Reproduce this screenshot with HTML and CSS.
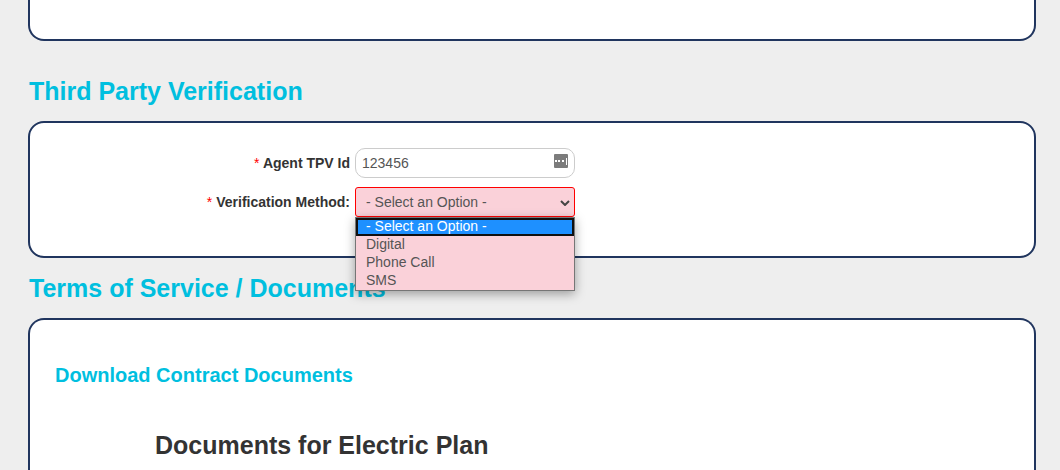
FILE: index.html
```
<!DOCTYPE html>
<html lang="en">
<head>
    <meta charset="UTF-8">
    <title>Third Party Verification</title>
    <link rel="stylesheet" href="styles.css">
</head>
<body>
<main class="page">
    <section class="panel panel-end"></section>

    <h2 class="section-title section-title-spaced">Third Party Verification</h2>
    <form class="panel tpv-form">
        <div class="form-row">
            <label class="form-label" for="agentTpvId"><span class="required">*</span> Agent TPV Id</label>
            <div class="field">
                <input class="text-input" type="text" id="agentTpvId" value="123456">
                <svg class="field-icon" width="14" height="14" viewBox="0 0 14 14" aria-hidden="true">
                    <rect width="14" height="14" rx="1" fill="#7c7c7c"/>
                    <path d="M1 6h2v2H1zM4 6h2v2H4zM8 6h2v2H8zM12 4h1v7h-1z" fill="#fff"/>
                </svg>
            </div>
        </div>
        <div class="form-row">
            <label class="form-label" for="verificationMethod"><span class="required">*</span> Verification Method:</label>
            <div class="field">
                <select class="select-input" id="verificationMethod">
                    <option selected>- Select an Option -</option>
                    <option>Digital</option>
                    <option>Phone Call</option>
                    <option>SMS</option>
                </select>
                <svg class="select-arrow" width="10" height="6" viewBox="0 0 10 6" aria-hidden="true">
                    <path d="M1 1l4 4 4-4" fill="none" stroke="#444" stroke-width="2"/>
                </svg>
                <ul class="option-list" role="listbox" aria-label="Verification Method">
                    <li class="option active" role="option" aria-selected="true">- Select an Option -</li>
                    <li class="option" role="option">Digital</li>
                    <li class="option" role="option">Phone Call</li>
                    <li class="option" role="option">SMS</li>
                </ul>
            </div>
        </div>
    </form>

    <h2 class="section-title">Terms of Service / Documents</h2>
    <section class="panel documents">
        <h3 class="documents-title">Download Contract Documents</h3>
        <h2 class="plan-title">Documents for Electric Plan</h2>
    </section>
</main>
</body>
</html>
```
FILE: styles.css
```
* {
    box-sizing: border-box;
}
body {
    margin: 0;
    background-color: #eee;
    color: #333;
    font-family: "Liberation Sans", Arial, sans-serif;
    font-size: 14px;
    line-height: 20px;
}
.page {
    display: flex;
    flex-direction: column;
    min-height: 100vh;
    padding: 0 24px 0 28px;
}
.panel {
    border: 2px solid #20355e;
    border-radius: 16px;
    background-color: #fff;
}
.panel-end {
    padding-top: 39px;
    border-top: 0;
    border-radius: 0 0 16px 16px;
}
.section-title {
    margin: 10px 0;
    padding-left: 1px;
    color: #00bfdf;
    font-size: 25px;
    line-height: 40px;
}
.section-title-spaced {
    margin-top: 30px;
}

.tpv-form {
    display: flex;
    flex-direction: column;
    gap: 9px;
    padding: 25px 25px 39px;
}
.form-row {
    display: flex;
    align-items: center;
    gap: 5px;
}
.form-label {
    width: 295px;
    font-weight: bold;
    text-align: right;
}
.required {
    color: #f00;
    font-weight: normal;
}
.field {
    position: relative;
    width: 220px;
}
.text-input,
.select-input {
    display: block;
    width: 100%;
    height: 30px;
    color: #555;
    font: inherit;
}
.text-input {
    padding: 4px 28px 4px 6px;
    border: 1px solid #ccc;
    border-radius: 10px;
    background-color: #fff;
}
.select-input {
    padding: 4px 20px 4px 10px;
    border: 1px solid #f00;
    border-radius: 3px;
    background-color: #fad1d9;
    appearance: none;
}
.field-icon {
    position: absolute;
    top: 6px;
    right: 7px;
}
.select-arrow {
    position: absolute;
    top: 13px;
    right: 5px;
    pointer-events: none;
}

/* open drop-down */
.option-list {
    position: absolute;
    top: 100%;
    left: 0;
    z-index: 1;
    width: 100%;
    margin: 0;
    padding: 0 0 2px;
    border: 1px solid #767676;
    background-color: #fad1d9;
    box-shadow: 0 3px 10px rgba(0, 0, 0, .35);
    color: #555;
    list-style: none;
}
.option {
    height: 18px;
    padding: 0 10px;
    line-height: 16px;
}
.option.active {
    padding: 0 8px;
    border: 2px solid #101010;
    background-color: #1e90ff;
    color: #fff;
    line-height: 12px;
}
.option:last-child {
    height: 16px;
}

.documents {
    flex: 1;
    padding: 40px 25px 0;
    border-bottom: 0;
    border-radius: 16px 16px 0 0;
}
.documents-title {
    margin: 0;
    color: #00bfdf;
    font-size: 20px;
    line-height: 30px;
}
.plan-title {
    margin: 35px 0 0;
    padding-left: 100px;
    font-size: 25px;
    line-height: 40px;
}
```
